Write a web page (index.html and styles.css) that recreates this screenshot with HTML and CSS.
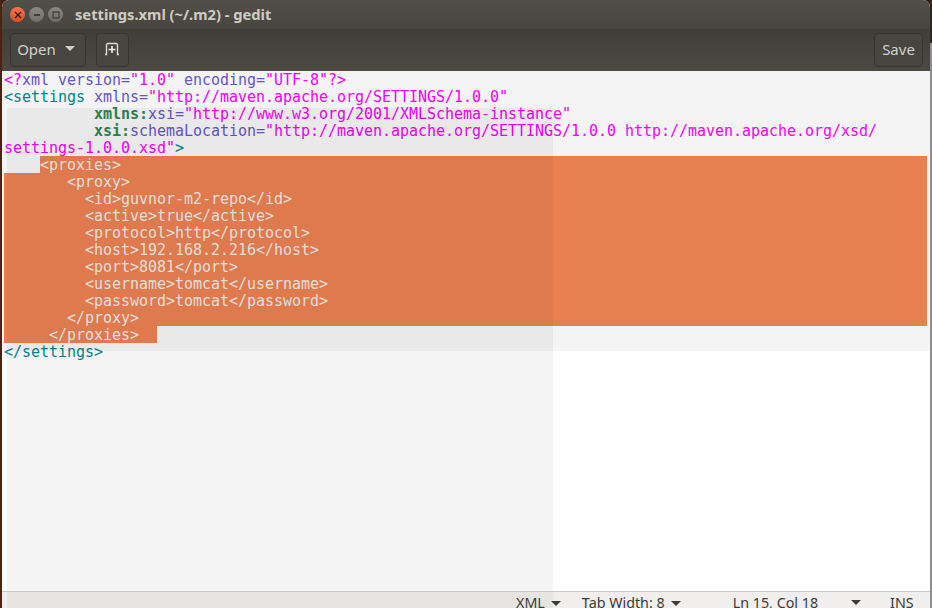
FILE: index.html
```html
<!DOCTYPE html>
<html lang="en">
<head>
<meta charset="utf-8">
<title>settings.xml (~/.m2) - gedit</title>
<link rel="stylesheet" href="styles.css">
</head>
<body>
<div class="desktop">
<div class="edge-left"></div>
<div class="window">
  <header class="titlebar">
    <div class="controls">
      <span class="ctl close"><svg viewBox="0 0 8 8" width="8" height="8"><path d="M1 1l6 6M7 1l-6 6" stroke="#3a1208" stroke-width="1.2" fill="none"/></svg></span>
      <span class="ctl"><svg viewBox="0 0 8 8" width="8" height="8"><path d="M1 4h6" stroke="#2f2e29" stroke-width="1.3" fill="none"/></svg></span>
      <span class="ctl"><svg viewBox="0 0 8 8" width="8" height="8"><rect x="1" y="1" width="6" height="6" stroke="#2f2e29" stroke-width="1" fill="none"/></svg></span>
    </div>
    <span class="title">settings.xml (~/.m2) - gedit</span>
  </header>
  <div class="toolbar">
    <button class="btn open">Open<span class="caret light"></span></button>
    <button class="btn newtab"><svg viewBox="0 0 16 14" width="16" height="14"><path d="M1 12.5H2.5V3Q2.5 1.5 4 1.5H12Q13.5 1.5 13.5 3V12.5H15" stroke="#dcd9d2" stroke-width="1.4" fill="none"/><path d="M8 4v7M4.5 7.5h7" stroke="#e8e6e0" stroke-width="1.7" fill="none"/></svg></button>
    <button class="btn save">Save</button>
  </div>
  <main class="editor">
    <div class="code">
      <div class="line"><span class="val">&lt;?</span><span class="attr">xml version=</span><span class="val">"1.0"</span> <span class="attr">encoding=</span><span class="val">"UTF-8"?&gt;</span></div>
      <div class="line"><span class="tag">&lt;settings</span> <span class="attr">xmlns=</span><span class="val">"http://maven.apache.org/SETTINGS/1.0.0"</span></div>
      <div class="line">          <b class="ns">xmlns:</b><span class="attr">xsi=</span><span class="val">"http://www.w3.org/2001/XMLSchema-instance"</span></div>
      <div class="line">          <b class="ns">xsi:</b><span class="attr">schemaLocation=</span><span class="val">"http://maven.apache.org/SETTINGS/1.0.0 http://maven.apache.org/xsd/</span></div>
      <div class="line"><span class="val">settings-1.0.0.xsd"</span><span class="tag">&gt;</span></div>
      <div class="line sel first">&lt;proxies&gt;</div>
      <div class="line sel">       &lt;proxy&gt;</div>
      <div class="line sel">         &lt;id&gt;guvnor-m2-repo&lt;/id&gt;</div>
      <div class="line sel">         &lt;active&gt;true&lt;/active&gt;</div>
      <div class="line sel">         &lt;protocol&gt;http&lt;/protocol&gt;</div>
      <div class="line sel">         &lt;host&gt;192.168.2.216&lt;/host&gt;</div>
      <div class="line sel">         &lt;port&gt;8081&lt;/port&gt;</div>
      <div class="line sel">         &lt;username&gt;tomcat&lt;/username&gt;</div>
      <div class="line sel">         &lt;password&gt;tomcat&lt;/password&gt;</div>
      <div class="line sel">       &lt;/proxy&gt;</div>
      <div class="line sel last">     &lt;/proxies&gt;</div>
      <div class="line"><span class="tag">&lt;/settings&gt;</span></div>
    </div>
    <div class="shade-col"></div>
    <div class="shade-row"></div>
  </main>
  <footer class="statusbar">
    <span class="item lang">XML<span class="caret"></span></span>
    <span class="item tabw">Tab Width: 8<span class="caret"></span></span>
    <span class="item pos">Ln 15, Col 18</span>
    <span class="caret poscaret"></span>
    <span class="item ins">INS</span>
  </footer>
</div>
<div class="edge-right"></div>
</div>
</body>
</html>
```
FILE: styles.css
```css
* { box-sizing: border-box; }
html, body { margin: 0; height: 100%; overflow: hidden; }
body {
  background: #3c1a10;
  font-family: "Noto Sans", "Liberation Sans", sans-serif;
}
.desktop { display: flex; height: 608px; }
.edge-left { width: 2px; flex: none; background: #4a2412; }
.edge-right { width: 2px; flex: none; background: linear-gradient(#2b2926 43px, #8e8e8e 43px); }
.window {
  flex: 1;
  min-width: 0;
  display: flex;
  flex-direction: column;
  background: #fff;
  border-top-left-radius: 7px;
  border-top-right-radius: 7px;
  overflow: hidden;
}
.titlebar {
  height: 29px;
  flex: none;
  display: flex;
  align-items: center;
  padding-left: 8px;
  background: linear-gradient(#514f47, #47453e);
}
.controls { display: flex; gap: 4px; width: 65px; }
.ctl {
  width: 15px; height: 15px;
  border-radius: 50%;
  background: linear-gradient(#8a8880, #6f6d66);
  display: flex; align-items: center; justify-content: center;
}
.close { background: linear-gradient(#f0764a, #d9502a); }
.title { font-size: 14.7px; font-weight: 700; color: #cfccc5; padding-bottom: 2px; }
.toolbar {
  height: 42px;
  flex: none;
  display: flex;
  align-items: center;
  gap: 10px;
  padding: 0 7px 1px 8px;
  background: linear-gradient(#403e38, #4b4942);
}
.btn {
  height: 34px;
  border: 1px solid #37352f;
  border-radius: 4px;
  background: #47453f;
  color: #d4d1cb;
  font: 15px "Noto Sans", "Liberation Sans", sans-serif;
  padding: 0 0 2px;
  display: flex;
  align-items: center;
  justify-content: center;
}
.open { width: 76px; gap: 9px; padding-right: 4px; }
.newtab { width: 33px; padding: 0 2px 2px 0; }
.save { width: 49px; margin-left: auto; }
.caret {
  display: inline-block;
  flex: none;
  width: 0; height: 0;
  border: 5px solid transparent;
  border-top-color: #3c3b37;
  border-bottom-width: 0;
}
.caret.light { border-top-color: #d4d1cb; }
.editor {
  flex: 1;
  position: relative;
  background: #fff;
  overflow: hidden;
}
.shade-col, .shade-row { position: absolute; top: 0; pointer-events: none; }
.shade-col { left: 5px; top: 37px; width: 546px; bottom: 0; background: rgba(0,0,0,.045); }
.shade-row { left: 0; right: 0; height: 280px; background: rgba(0,0,0,.045); }
.code {
  margin: 0 3px 0 2px;
  font: 15px/17px "DejaVu Sans Mono", monospace;
  letter-spacing: -0.03px;
}
.line { height: 17px; padding-top: 1px; white-space: pre; }
.tag { color: #008a8c; }
.attr { color: #6a5acd; }
.val { color: #ff00ff; }
.ns { color: #2e8b57; }
.sel { background: #f48656; color: #fbf2ec; }
.first { margin-left: 36px; }
.last { width: 153px; }
.statusbar {
  height: 17px;
  flex: none;
  display: flex;
  align-items: flex-start;
  overflow: hidden;
  background: linear-gradient(to right, #f0efed 5px, #e6e5e2 5px, #e6e5e2 551px, #f0efed 551px);
  border-top: 1px solid #c9c7c3;
  font-size: 14.3px;
  line-height: 20px;
  color: #3c3b37;
  padding: 1px 0 0 514px;
  white-space: nowrap;
}
.item { display: flex; align-items: center; gap: 6px; }
.tabw { margin-left: 21px; }
.pos { margin-left: 52px; }
.poscaret { margin: 7px 0 0 33px; }
.ins { margin-left: 29px; }
```
